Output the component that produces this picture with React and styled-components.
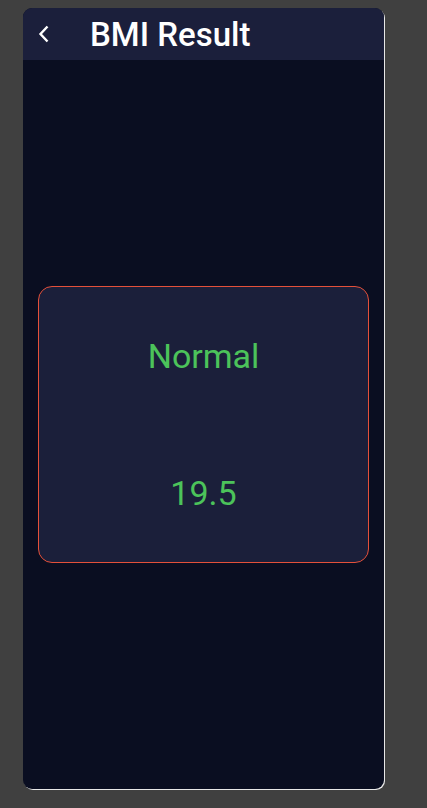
import styled, { createGlobalStyle } from "styled-components";

const Global = createGlobalStyle`
  body {
    margin: 0;
    background: #404040;
    font-family: Roboto, "Noto Sans", sans-serif;
  }
`;

const Page = styled.div`
  width: 427px;
  height: 808px;
  padding: 8px 0 0 23px;
  box-sizing: border-box;
`;

const Phone = styled.div`
  width: 361px;
  height: 781px;
  border-radius: 9px;
  overflow: hidden;
  background: #0a0e21;
  box-shadow: 1px 1px 0 #e8e8e8;
  display: flex;
  flex-direction: column;
`;

const Header = styled.header`
  height: 52px;
  background: #1b1f3b;
  display: flex;
  align-items: center;
  padding-left: 11px;
  gap: 36px;
  flex-shrink: 0;
`;

const Back = styled.button`
  background: none;
  border: 0;
  padding: 0;
  width: 20px;
  height: 20px;
  display: flex;
  align-items: center;
  justify-content: center;
  color: #fff;
`;

const Title = styled.h1`
  margin: 0;
  color: #fff;
  font-size: 33px;
  font-weight: 500;
`;

const Body = styled.main`
  flex: 1;
  display: flex;
  align-items: center;
  padding: 0 15px;
`;

const Card = styled.section`
  flex: 1;
  height: 277px;
  box-sizing: border-box;
  border: 1px solid #e4503a;
  border-radius: 14px;
  background: #1b1f3a;
  display: flex;
  flex-direction: column;
  justify-content: space-around;
  align-items: center;
`;

const Value = styled.div`
  color: #4cc35a;
  font-size: 34px;
  font-weight: 400;
  line-height: 40px;
`;

export default function App() {
  return (
    <>
      <Global />
      <Page>
        <Phone>
          <Header>
            <Back aria-label="back">
              <svg width="12" height="18" viewBox="0 0 12 18" fill="none">
                <path d="M9.5 1.5 L2.5 9 L9.5 16.5" stroke="#fff" strokeWidth="2.4" />
              </svg>
            </Back>
            <Title>BMI Result</Title>
          </Header>
          <Body>
            <Card>
              <Value>Normal</Value>
              <Value>19.5</Value>
            </Card>
          </Body>
        </Phone>
      </Page>
    </>
  );
}
